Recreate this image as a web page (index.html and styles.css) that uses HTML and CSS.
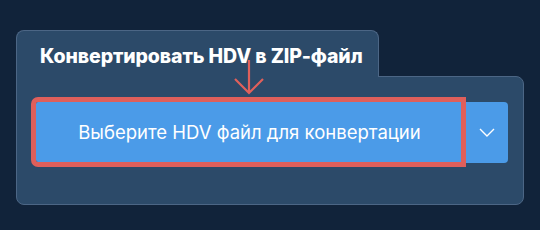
FILE: index.html
```html
<!DOCTYPE html>
<html lang="ru">
<head>
<meta charset="utf-8">
<title>Конвертировать HDV в ZIP-файл</title>
<link rel="stylesheet" href="styles.css">
</head>
<body>
<div class="card">
  <div class="tab">
    <h1 class="title">Конвертировать HDV в ZIP-файл</h1>
  </div>
  <div class="panel">
    <svg class="pointer" width="32" height="36" viewBox="0 0 32 36" aria-hidden="true">
      <path d="M16 0 V33 M2 19 L16 33 L30 19" fill="none" stroke="#e0605b" stroke-width="2.2"/>
    </svg>
    <div class="split">
      <button class="choose" type="button">Выберите HDV файл для конвертации</button>
      <button class="more" type="button" aria-label="Ещё">
        <svg width="16" height="9" viewBox="0 0 16 9"><path d="M1 1 L8 8 L15 1" fill="none" stroke="#ffffff" stroke-width="1.4"/></svg>
      </button>
    </div>
  </div>
</div>
</body>
</html>
```
FILE: styles.css
```css
html, body {
  margin: 0;
  padding: 0;
}
body {
  background: #11233a;
  width: 540px;
  height: 230px;
  overflow: hidden;
  font-family: Inter, "Noto Sans", sans-serif;
}
.card {
  margin: 30px 0 0 16px;
  width: 508px;
  display: flex;
  flex-direction: column;
  align-items: flex-start;
}
.tab {
  position: relative;
  z-index: 1;
  box-sizing: border-box;
  width: 363px;
  height: 47px;
  margin-bottom: -1px;
  background: #2c4a69;
  border: 1px solid #4c6685;
  border-bottom: none;
  border-radius: 8px 8px 0 0;
  padding: 13px 0 0 23px;
}
.title {
  margin: 0;
  color: #ffffff;
  font-size: 19.5px;
  font-weight: 800;
  line-height: 24px;
  letter-spacing: -0.1px;
  white-space: nowrap;
}
.panel {
  position: relative;
  box-sizing: border-box;
  width: 508px;
  height: 129px;
  background: #2c4a69;
  border: 1px solid #4c6685;
  border-radius: 0 8px 8px 8px;
  padding: 25px 15px 0 19px;
}
.pointer {
  position: absolute;
  left: 216px;
  top: -17px;
  z-index: 2;
}
.split {
  display: flex;
  height: 61px;
}
.choose {
  flex: 0 0 425px;
  height: 60px;
  border: none;
  margin: 0;
  background: #4b9be8;
  color: #ffffff;
  font-family: inherit;
  font-size: 18.5px;
  font-weight: 400;
  border-radius: 2px 0 0 2px;
  outline: 5px solid #df5f5b;
  position: relative;
  z-index: 1;
  padding: 0 0 0 2px;
}
.more {
  flex: 1;
  border: none;
  margin: 0;
  background: #4b9be8;
  border-radius: 0 4px 4px 0;
  display: flex;
  align-items: center;
  justify-content: center;
  padding: 0 0 0 5px;
}
.more svg {
  display: block;
}
```
